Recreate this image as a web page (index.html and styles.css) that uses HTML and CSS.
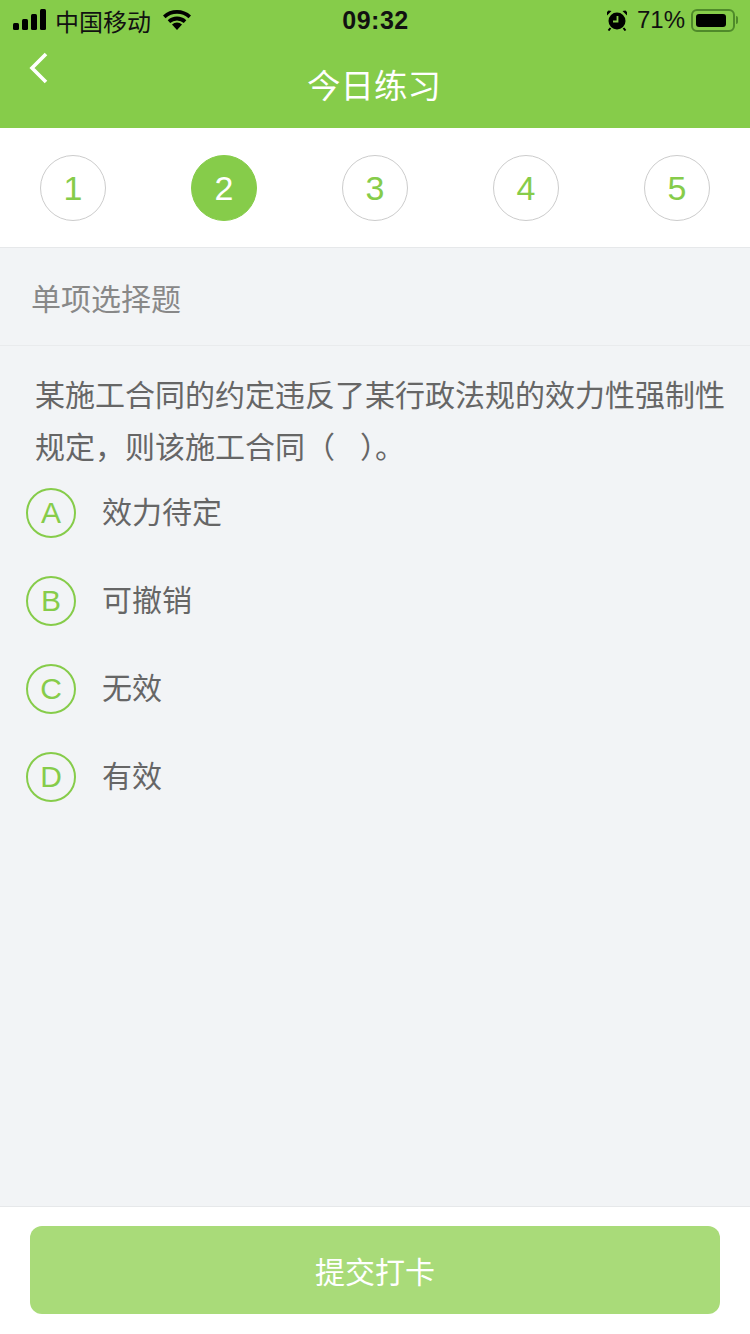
FILE: index.html
```html
<!DOCTYPE html>
<html lang="zh-CN">
<head>
  <meta charset="UTF-8">
  <meta name="viewport" content="width=device-width, initial-scale=1.0">
  <title>今日练习</title>
  <link rel="stylesheet" href="styles.css">
</head>
<body>
  <header class="top">
    <div class="status">
      <div class="status-left">
        <svg class="signal" width="34" height="22" viewBox="0 0 34 22">
          <rect x="0" y="14" width="6" height="7" rx="1.5"/>
          <rect x="9" y="10" width="6" height="11" rx="1.5"/>
          <rect x="18" y="5" width="6" height="16" rx="1.5"/>
          <rect x="27" y="0" width="6" height="21" rx="1.5"/>
        </svg>
        <span>中国移动</span>
        <svg class="wifi" width="30" height="22" viewBox="0 0 30 22">
          <path d="M15 21l-5-5.6a7.4 7.4 0 0 1 10 0z"/>
          <path d="M15 7.6c3.500 0 6.800 1.300 9.300 3.600l-2.500 2.800a10.200 10.200 0 0 0-13.600 0l-2.500-2.800A13.800 13.800 0 0 1 15 7.600z"/>
          <path d="M15 1c5.300 0 10.200 2 14 5.400l-2.500 2.800A17.200 17.200 0 0 0 15 4.800 17.200 17.200 0 0 0 3.500 9.200L1 6.400A20.800 20.800 0 0 1 15 1z"/>
        </svg>
      </div>
      <div class="status-time">09:32</div>
      <div class="status-right">
        <svg class="alarm" width="22" height="22" viewBox="0 0 22 22">
          <circle cx="11" cy="12" r="8.500"/>
          <path d="M1 6.500L5.500 2 2.500 1.500 1 3zM21 6.500L16.500 2l3-.5L21 3z"/>
          <path d="M4.500 19l-2 2.500M17.500 19l2 2.500" stroke="#000" stroke-width="2" fill="none"/>
          <path d="M11.500 7v5.500H7" stroke="#86cc4a" stroke-width="1.800" fill="none"/>
        </svg>
        <span>71%</span>
        <div class="battery"><div class="battery-level"></div></div>
        <div class="battery-tip"></div>
      </div>
    </div>
    <div class="nav">
      <svg class="back" width="20" height="32" viewBox="0 0 20 32">
        <path d="M17 2L3 16l14 14" fill="none" stroke="#fff" stroke-width="3.600"/>
      </svg>
      <h1>今日练习</h1>
    </div>
  </header>

  <div class="steps">
    <div class="step">1</div>
    <div class="step current">2</div>
    <div class="step">3</div>
    <div class="step">4</div>
    <div class="step">5</div>
  </div>

  <main class="content">
    <div class="type">单项选择题</div>
    <p class="question">某施工合同的约定违反了某行政法规的效力性强制性规定，则该施工合同（ &nbsp; ）。</p>
    <ul class="options">
      <li class="option"><span class="letter">A</span><span>效力待定</span></li>
      <li class="option"><span class="letter">B</span><span>可撤销</span></li>
      <li class="option"><span class="letter">C</span><span>无效</span></li>
      <li class="option"><span class="letter">D</span><span>有效</span></li>
    </ul>
  </main>

  <footer class="bottom">
    <button type="button" class="submit">提交打卡</button>
  </footer>
</body>
</html>
```

FILE: styles.css
```css
* {
  box-sizing: border-box;
}

body {
  margin: 0;
  width: 750px;
  height: 1334px;
  display: flex;
  flex-direction: column;
  font-family: "Liberation Sans", "Noto Sans CJK SC", sans-serif;
  background-color: #f2f4f6;
  color: #666;
  overflow: hidden;
}

.top {
  height: 128px;
  background-color: #86cc4a;
}

.status {
  height: 40px;
  padding: 0 12px 0 13px;
  display: flex;
  align-items: center;
  justify-content: space-between;
  color: #111;
  font-size: 24px;
}

.status-left, .status-right {
  width: 300px;
  display: flex;
  align-items: center;
}

.status-right {
  justify-content: flex-end;
}

.signal {
  margin-right: 8px;
}

.wifi {
  margin-left: 11px;
}

.status-time {
  font-size: 25px;
  font-weight: bold;
  letter-spacing: 0.5px;
}

.alarm {
  margin-right: 9px;
}

.battery {
  width: 44px;
  height: 23px;
  margin-left: 6px;
  padding: 3px;
  border: 2px solid #4f8a2a;
  border-radius: 6px;
}

.battery-level {
  width: 30px;
  height: 100%;
  background-color: #000;
  border-radius: 3px;
}

.battery-tip {
  width: 2px;
  height: 8px;
  margin-left: 1px;
  background-color: #4f8a2a;
  border-radius: 0 2px 2px 0;
}

.nav {
  position: relative;
  height: 88px;
  display: flex;
  align-items: center;
  justify-content: center;
}

.back {
  position: absolute;
  left: 29px;
  top: 12px;
}

.nav h1 {
  margin: 0 0 0 -2px;
  position: relative;
  top: -1px;
  font-size: 33.500px;
  font-weight: normal;
  color: #fff;
}

.steps {
  height: 120px;
  padding: 27px 40px 0;
  display: flex;
  justify-content: space-between;
  align-items: flex-start;
  background-color: #fff;
  border-bottom: 1px solid #e6e8ea;
}

.step {
  width: 66px;
  height: 66px;
  display: flex;
  align-items: center;
  justify-content: center;
  border: 1px solid #ccc;
  border-radius: 50%;
  font-size: 34px;
  color: #86cc4a;
}

.step.current {
  background-color: #86cc4a;
  border-color: #86cc4a;
  color: #fff;
}

.content {
  flex: 1;
}

.type {
  height: 98px;
  padding: 0 31px;
  display: flex;
  align-items: center;
  font-size: 30px;
  color: #888;
  border-bottom: 1px solid #e9ebed;
}

.question {
  margin: 0;
  padding: 24px 20px 0 35px;
  font-size: 30px;
  line-height: 52px;
  color: #666;
}

.options {
  list-style: none;
  margin: 0;
  padding: 14px 0 0 26px;
}

.option {
  height: 88px;
  display: flex;
  align-items: flex-start;
  gap: 26px;
  font-size: 30px;
  line-height: 50px;
  color: #666;
}

.letter {
  width: 50px;
  height: 50px;
  display: flex;
  align-items: center;
  justify-content: center;
  border: 2px solid #86cc4a;
  border-radius: 50%;
  font-size: 30px;
  color: #86cc4a;
}

.bottom {
  height: 128px;
  padding: 19px 30px 0;
  background-color: #fff;
  border-top: 1px solid #e6e8ea;
}

.submit {
  width: 100%;
  height: 88px;
  border: none;
  border-radius: 12px;
  background-color: #a9db79;
  color: #fff;
  font-family: inherit;
  font-size: 30px;
}
```
